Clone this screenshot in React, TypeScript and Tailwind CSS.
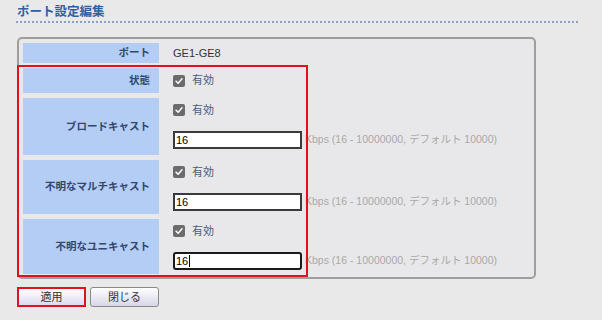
import React from 'react'

const JP = "font-['Liberation_Sans','Noto_Sans_CJK_JP',sans-serif]"

type Row = {
	label: string
	height: string
	input?: boolean
	focused?: boolean
}

const ROWS: Row[] = [
	{ label: '状態', height: 'h-[25px]' },
	{ label: 'ブロードキャスト', height: 'h-[57px]', input: true },
	{ label: '不明なマルチキャスト', height: 'h-[54px]', input: true },
	{ label: '不明なユニキャスト', height: 'h-[55px]', input: true, focused: true }
]

const Check = () => (
	<span className="flex h-[12px] w-[12px] items-center justify-center rounded-[2px] bg-[#6b6b6b]">
		<svg viewBox="0 0 12 12" className="h-[10px] w-[10px]">
			<path d="M2.5 6.2 L5 8.6 L9.6 3.4" fill="none" stroke="#fff" strokeWidth="1.8" strokeLinecap="round" strokeLinejoin="round" />
		</svg>
	</span>
)

const Enabled = () => (
	<div className="flex items-center gap-[7px]">
		<Check />
		<span className="text-[11px] leading-none text-[#4b5c80]">有効</span>
	</div>
)

export default function App() {
	return (
		<div className={`h-[320px] w-[602px] overflow-hidden bg-[#e9e9e9] ${JP}`}>
			<div className="px-[16px] pt-[5px]">
				{/* Title */}
				<div className="pl-[1px] text-[12.5px] leading-[15px] font-bold text-[#2f5fa4]">ポート設定編集</div>
				<div className="mt-[1px] w-[562px] border-t-2 border-dotted border-[#8c9fc4]" />

				{/* Panel */}
				<div className="relative mt-[14px] ml-[1px]">
					<div className="w-[519px] rounded-[5px] border-2 border-[#9e9e9e] bg-[#e8e8ea] px-[4px] pt-[4px] pb-[3px]">
						<div className="flex flex-col gap-[5px]">
							<div className="flex h-[20px]">
								<div className="flex w-[136px] items-center justify-end bg-[#b3cdf4] pr-[9px] text-[10.5px] font-bold text-[#34466c]">
									ポート
								</div>
								<div className="flex items-center pl-[14px] text-[11px] text-[#333]">GE1-GE8</div>
							</div>
							{ROWS.map(row => (
								<div key={row.label} className={`flex ${row.height}`}>
									<div className="flex w-[136px] items-center justify-end bg-[#b3cdf4] pr-[9px] text-[10.5px] font-bold text-[#34466c]">
										{row.label}
									</div>
									<div className={`flex flex-col pl-[14px] ${row.input ? 'pt-[6px]' : 'justify-center'}`}>
										<Enabled />
										{row.input && (
											<div className="mt-[15px] flex items-center">
												<div
													className={`flex h-[18px] w-[129px] items-center border-2 bg-white pl-[1px] text-[11px] text-black ${
														row.focused ? 'rounded-[3px] border-[#1a1a1a]' : 'border-[#3a3a3a]'
													}`}
												>
													16
													{row.focused && <span className="ml-[1px] h-[12px] w-px bg-black" />}
												</div>
												<span className="ml-[3px] text-[10.5px] whitespace-nowrap text-[#a8a8a8]">
													Kbps (16 - 10000000, デフォルト 10000)
												</span>
											</div>
										)}
									</div>
								</div>
							))}
						</div>
					</div>
					{/* red highlight */}
					<div className="pointer-events-none absolute top-[28px] left-0 h-[212px] w-[291px] border-2 border-[#e0121c]" />
				</div>

				{/* Buttons */}
				<div className="mt-[8px] ml-[1px] flex gap-[4px]">
					<div className="border-2 border-[#e0121c]">
						<button className="flex h-[16px] w-[65px] items-center justify-center bg-gradient-to-b from-white to-[#dcdcf0] text-[11px] text-[#333]">
							適用
						</button>
					</div>
					<button className="flex h-[20px] w-[69px] items-center justify-center rounded-[3px] border border-[#8a8a8a] bg-gradient-to-b from-white to-[#d6d6e8] text-[11px] text-[#333]">
						閉じる
					</button>
				</div>
			</div>
		</div>
	)
}
